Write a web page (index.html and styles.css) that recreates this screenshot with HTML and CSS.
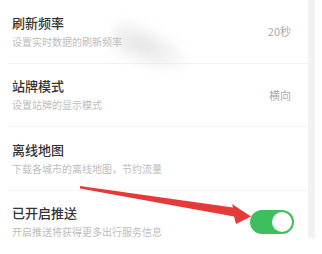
FILE: index.html
```html
<!DOCTYPE html>
<html lang="zh-CN">
<head>
    <meta charset="UTF-8">
    <meta name="viewport" content="width=device-width, initial-scale=1.0">
    <title>设置</title>
    <link rel="stylesheet" href="styles.css">
</head>
<body>
    <div class="page">
        <div class="list">
            <div class="row">
                <div class="text">
                    <div class="title">刷新频率</div>
                    <div class="desc">设置实时数据的刷新频率</div>
                </div>
                <div class="value">20秒</div>
            </div>
            <div class="row">
                <div class="text">
                    <div class="title">站牌模式</div>
                    <div class="desc">设置站牌的显示模式</div>
                </div>
                <div class="value">横向</div>
            </div>
            <div class="row">
                <div class="text">
                    <div class="title">离线地图</div>
                    <div class="desc">下载各城市的离线地图，节约流量</div>
                </div>
            </div>
            <div class="row last">
                <div class="text">
                    <div class="title">已开启推送</div>
                    <div class="desc">开启推送将获得更多出行服务信息</div>
                </div>
                <div class="switch on"><span class="knob"></span></div>
            </div>
        </div>
        <div class="scrollbar"></div>
    </div>

    <!-- mancha borrosa sobre la primera fila -->
    <div class="smudge"></div>

    <!-- flecha roja de anotación -->
    <svg class="arrow" width="322" height="254" viewBox="0 0 322 254">
        <polygon points="80,186 233,207.5 232,204 251,216.5 236,224 234,216.5 80,188.5" fill="#e63a3a"/>
    </svg>
</body>
</html>
```

FILE: styles.css
```css
body { margin: 0; background: #fff; font-family: "Noto Sans CJK SC", "Noto Sans", sans-serif; width: 322px; height: 254px; overflow: hidden; position: relative; }
.page { display: flex; align-items: flex-start; }
.list { width: 308px; }
.scrollbar { width: 7px; height: 238px; background: #f2f2f2; }
.row { display: flex; align-items: center; justify-content: space-between; height: 62.5px; margin-left: 8px; padding: 0 14px 0 4px; border-bottom: 1px solid #f3f3f3; }
.row.last { border-bottom: none; }
.text { display: flex; flex-direction: column; gap: 3px; }
.title { font-size: 13px; line-height: 18px; color: #333; font-weight: 500; }
.desc { font-size: 10px; line-height: 14px; color: #bdbdbd; }
.value { font-size: 11px; color: #aaa; margin-right: 3px; }
.switch { width: 44px; height: 24px; border-radius: 12px; background: #3cbf5c; position: relative; }
.knob { position: absolute; right: 2px; top: 2px; width: 20px; height: 20px; border-radius: 50%; background: #fff; }
.smudge { position: absolute; left: 108px; top: 30px; width: 90px; height: 44px; transform: rotate(22deg); background: radial-gradient(ellipse at 35% 45%, rgba(205,205,205,0.55), rgba(255,255,255,0) 65%); filter: blur(5px); }
.arrow { position: absolute; left: 0; top: 0; }
```
